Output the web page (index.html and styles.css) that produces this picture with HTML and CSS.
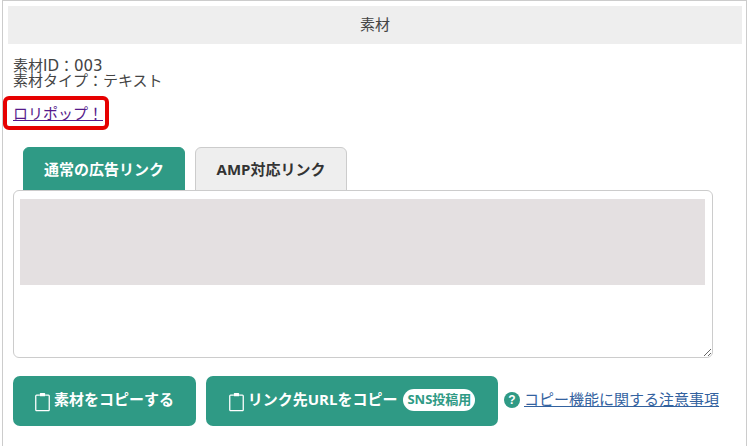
FILE: index.html
```html
<!DOCTYPE html>
<html lang="ja">
<head>
<meta charset="utf-8">
<title>素材</title>
<link rel="stylesheet" href="styles.css">
</head>
<body>
<main class="frame">
  <h2 class="head">素材</h2>
  <div class="meta">
    <div>素材ID：003</div>
    <div>素材タイプ：テキスト</div>
  </div>
  <div class="mark"><a class="name" href="#">ロリポップ！</a></div>
  <div class="tabs">
    <div class="tab active">通常の広告リンク</div>
    <div class="tab">AMP対応リンク</div>
  </div>
  <div class="area"><div class="code"></div></div>
  <div class="actions">
    <button class="btn first" type="button">
      <svg class="clip" viewBox="0 0 14 18" aria-hidden="true"><path d="M4.500 2.500H1.500a.8.8 0 0 0-.8.8v13a.8.8 0 0 0 .8.8h11a.8.8 0 0 0 .8-.8v-13a.8.8 0 0 0-.8-.8H9.500" fill="none" stroke="#fff" stroke-width="1.200"/><rect x="4.500" y="0.700" width="5" height="3" rx=".6" fill="#fff"/></svg>
      素材をコピーする
    </button>
    <button class="btn second" type="button">
      <svg class="clip" viewBox="0 0 14 18" aria-hidden="true"><path d="M4.500 2.500H1.500a.8.8 0 0 0-.8.8v13a.8.8 0 0 0 .8.8h11a.8.8 0 0 0 .8-.8v-13a.8.8 0 0 0-.8-.8H9.500" fill="none" stroke="#fff" stroke-width="1.200"/><rect x="4.500" y="0.700" width="5" height="3" rx=".6" fill="#fff"/></svg>
      リンク先URLをコピー
      <span class="badge">SNS投稿用</span>
    </button>
    <span class="help"><span class="q">?</span><a class="note" href="#">コピー機能に関する注意事項</a></span>
  </div>
</main>
</body>
</html>
```

FILE: styles.css
```css
* { box-sizing: border-box; }
html, body { margin: 0; padding: 0; background: #fff; }
body {
  width: 748px;
  height: 446px;
  overflow: hidden;
  font-family: "Noto Sans CJK JP", "Noto Sans", sans-serif;
  font-size: 15px;
  color: #444;
}
.frame {
  margin-left: 2px;
  width: 745px;
  height: 446px;
  border: 1px solid #ccc;
  border-width: 1px 1px 0 1px;
  padding: 5px 4px 0 5px;
}
.head {
  margin: 0;
  width: 734px;
  height: 38px;
  background: #eee;
  font-size: 15px;
  font-weight: 400;
  line-height: 36px;
  text-align: center;
  color: #444;
}
.meta {
  margin: 15px 0 0 5px;
  font-family: "DejaVu Sans", "Noto Sans CJK JP", sans-serif;
  line-height: 15px;
}
.mark {
  margin: 7px 0 0 -5px;
  width: 106px;
  height: 34px;
  border: 4px solid #e60000;
  border-radius: 6px;
  padding-left: 6px;
  line-height: 25px;
}
.name { color: #551a8b; text-decoration: underline; }
.tabs {
  display: flex;
  gap: 10px;
  margin: 17px 0 0 15px;
  height: 43px;
}
.tab {
  height: 44px;
  padding-top: 10px;
  border: 1px solid #ccc;
  border-radius: 6px 6px 0 0;
  background: #eee;
  width: 152px;
  text-align: center;
  font-family: "Open Sans", "Noto Sans CJK JP", sans-serif;
  font-weight: 700;
  line-height: 22px;
  color: #333;
}
.tab.active {
  width: 162px;
  background: #2f9a85;
  border-color: #2f9a85;
  color: #fff;
}
.area {
  position: relative;
  margin-left: 5px;
  width: 700px;
  height: 168px;
  padding: 8px 7px 0 6px;
  border: 1px solid #ccc;
  border-radius: 6px;
  background: #fff;
  overflow: auto;
  resize: both;
}
.code {
  height: 86px;
  background: #e4e0e1;
}
.actions {
  display: flex;
  align-items: flex-start;
  margin: 18px 0 0 5px;
}
.btn {
  display: flex;
  align-items: center;
  justify-content: center;
  height: 50px;
  border: 0;
  border-radius: 7px;
  background: #2f9a85;
  color: #fff;
  font: 700 15px/1 "Open Sans", "Noto Sans CJK JP", sans-serif;
  padding: 0 0 3px;
}
.first { width: 183px; }
.second { width: 292px; margin-left: 10px; }
.clip { width: 15px; height: 20px; margin-right: 4px; margin-top: 5px; }
.badge {
  margin-left: 6px;
  padding: 0 4px;
  height: 22px;
  border-radius: 11px;
  background: #fff;
  color: #2f9a85;
  font-size: 13px;
  line-height: 21px;
}
.help {
  display: flex;
  align-items: center;
  margin: 12px 0 0 6px;
  line-height: 22px;
}
.q {
  width: 16px;
  height: 16px;
  margin-right: 4px;
  margin-top: 2px;
  border-radius: 50%;
  background: #2f9a85;
  color: #fff;
  font: 700 12px/16px "Liberation Sans", sans-serif;
  text-align: center;
}
.note { color: #33629f; text-decoration: underline; }
```
